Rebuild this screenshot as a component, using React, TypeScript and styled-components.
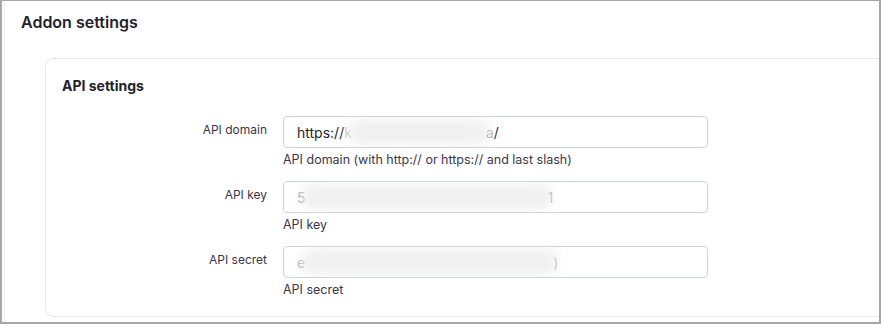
import React from "react";
import styled, { createGlobalStyle } from "styled-components";

const GlobalStyle = createGlobalStyle`
  html, body {
    margin: 0;
    padding: 0;
    background: #ffffff;
  }
  body {
    font-family: Inter, "Noto Sans", "Liberation Sans", sans-serif;
    -webkit-font-smoothing: antialiased;
  }
`;

const Frame = styled.div`
  width: 881px;
  height: 324px;
  box-sizing: border-box;
  border-style: solid;
  border-color: #a7a7a7;
  border-width: 1px 2px 2px 2px;
  padding-left: 2px;
  overflow: hidden;
  background: #fff;
`;

const Panel = styled.div`
  height: 100%;
  box-sizing: border-box;
  border-left: 1px solid #edf1f6;
  padding: 10px 0 0 16px;
`;

const PageTitle = styled.h1`
  margin: 0;
  font-size: 16px;
  line-height: 22px;
  font-weight: 600;
  color: #24222b;
`;

const Card = styled.section`
  margin: 25px -40px 0 24px;
  border: 1px solid #e7e8ec;
  border-radius: 8px;
  padding: 17px 16px 18px;
`;

const CardTitle = styled.h2`
  margin: 0 0 20px;
  font-size: 14px;
  line-height: 20px;
  font-weight: 700;
  color: #24222b;
`;

const Fields = styled.div`
  display: flex;
  flex-direction: column;
  gap: 13px;
`;

const Row = styled.div`
  display: grid;
  grid-template-columns: 205px 425px;
  column-gap: 16px;
`;

const Label = styled.label`
  text-align: right;
  font-size: 12px;
  line-height: 28px;
  color: #3b3545;
`;

const Control = styled.div`
  display: flex;
  flex-direction: column;
`;

const InputBox = styled.div<{ $muted?: boolean }>`
  height: 32px;
  box-sizing: border-box;
  border: 1px solid #cfd3da;
  border-radius: 4px;
  padding: 0 13px;
  display: flex;
  align-items: center;
  font-size: 14px;
  color: ${(p) => (p.$muted ? "#a9a9ad" : "#25232c")};
  white-space: nowrap;
  overflow: hidden;
`;

const Faint = styled.span`
  opacity: 0.3;
`;

const Blur = styled.span<{ $w: number }>`
  display: inline-block;
  width: ${(p) => p.$w}px;
  height: 24px;
  margin: 0 -3px;
  border-radius: 8px;
  background: #efefef;
  filter: blur(6px);
`;

const Help = styled.div`
  margin-top: 4px;
  font-size: 12.5px;
  line-height: 16px;
  color: #3d3747;
`;

const App: React.FC = () => (
  <>
    <GlobalStyle />
    <Frame>
      <Panel>
        <PageTitle>Addon settings</PageTitle>
        <Card>
          <CardTitle>API settings</CardTitle>
          <Fields>
            <Row>
              <Label>API domain</Label>
              <Control>
                <InputBox>
                  https://<Faint>k</Faint>
                  <Blur $w={140} />
                  <Faint>a</Faint>/
                </InputBox>
                <Help>API domain (with http:// or https:// and last slash)</Help>
              </Control>
            </Row>
            <Row>
              <Label>API key</Label>
              <Control>
                <InputBox $muted>
                  5<Blur $w={248} />1
                </InputBox>
                <Help>API key</Help>
              </Control>
            </Row>
            <Row>
              <Label>API secret</Label>
              <Control>
                <InputBox $muted>
                  e<Blur $w={254} />)
                </InputBox>
                <Help>API secret</Help>
              </Control>
            </Row>
          </Fields>
        </Card>
      </Panel>
    </Frame>
  </>
);

export default App;
